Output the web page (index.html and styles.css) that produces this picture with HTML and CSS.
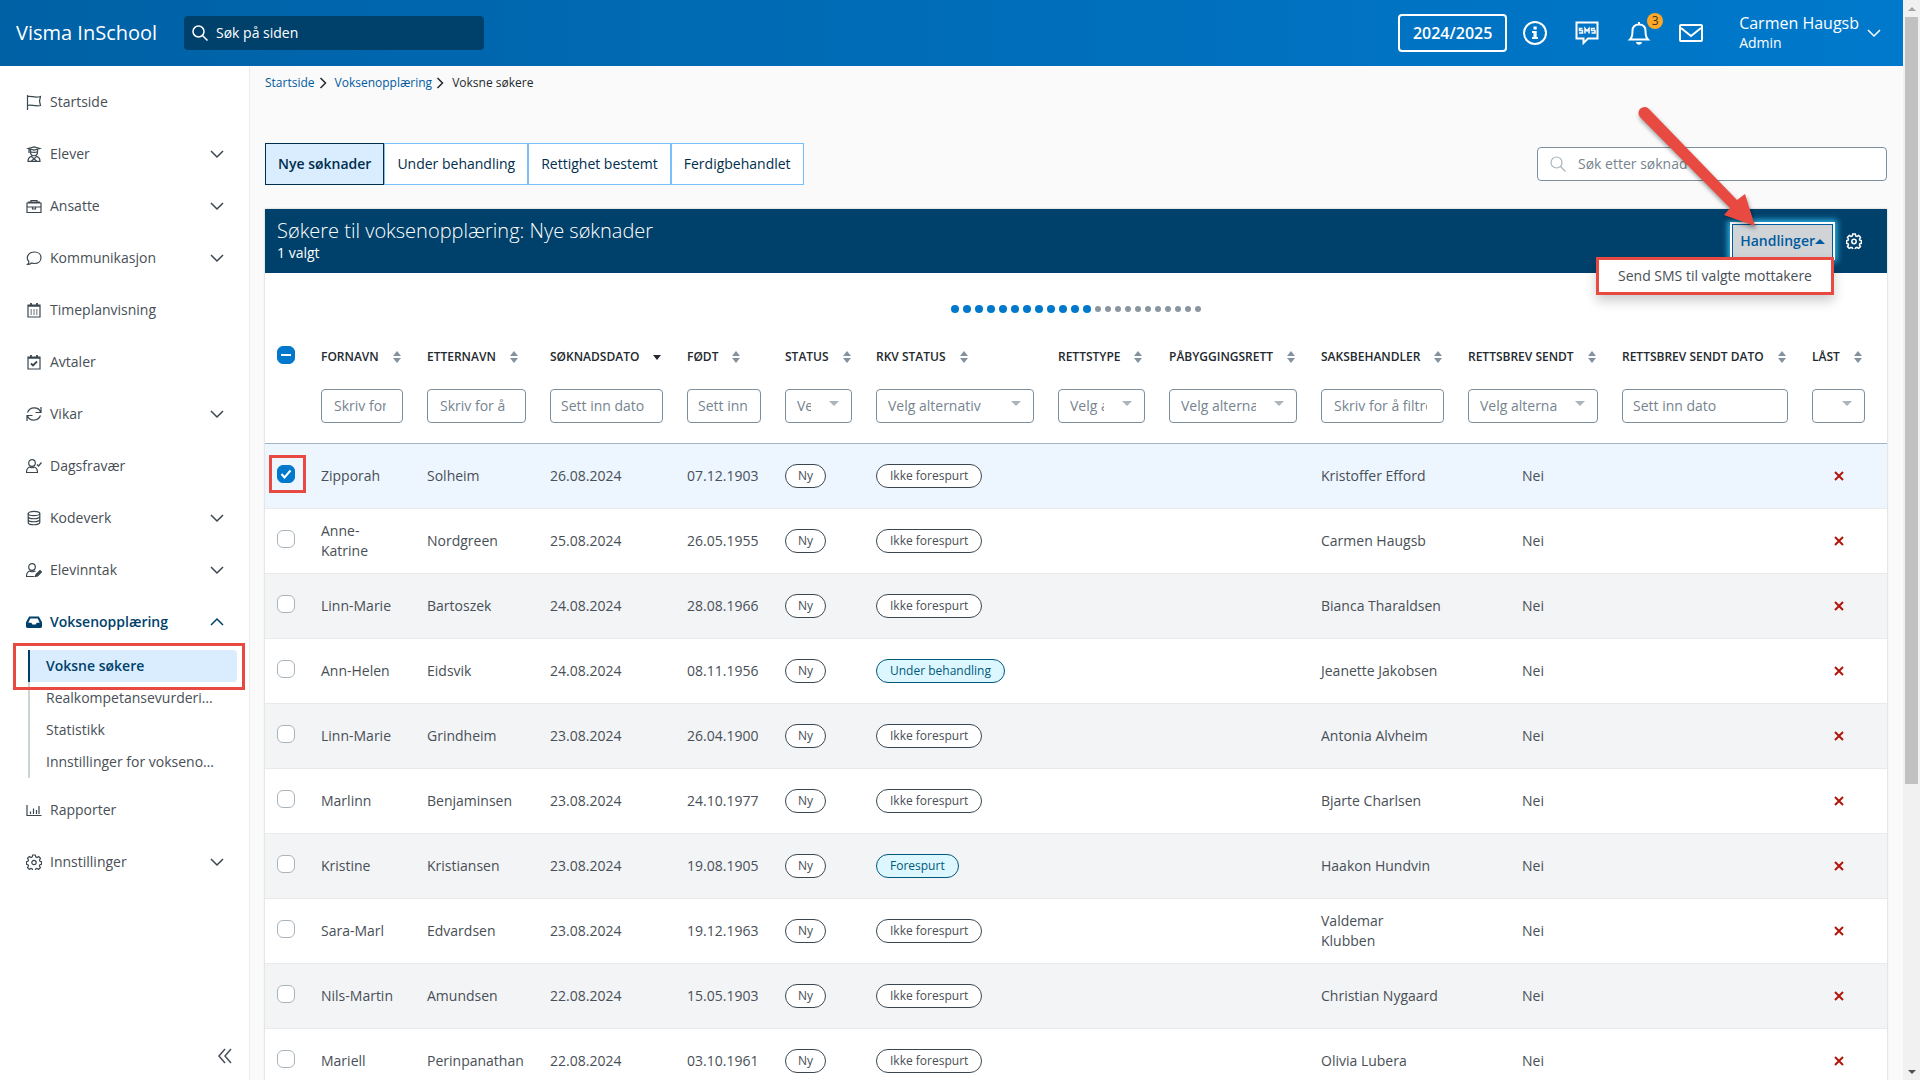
FILE: index.html
```html
<!DOCTYPE html>
<html lang="nb">
<head>
<meta charset="utf-8">
<title>Voksne søkere – Visma InSchool</title>
<link rel="stylesheet" href="styles.css">
</head>
<body>
<svg class="sprite" aria-hidden="true">
  <symbol id="i-down" viewBox="0 0 14 14"><path d="M1 4l6 6 6-6"/></symbol>
  <symbol id="i-up" viewBox="0 0 14 14"><path d="M1 10l6-6 6 6"/></symbol>
  <symbol id="i-right" viewBox="0 0 8 12"><path d="M1.500 1l5 5-5 5"/></symbol>
  <symbol id="i-search" viewBox="0 0 16 16"><circle cx="6.500" cy="6.500" r="5.500"/><path d="M10.500 10.500l5 5"/></symbol>
  <symbol id="i-gear" viewBox="0 0 16 16"><path d="M6.700 1h2.600l.4 1.900 1.300.6 1.700-1 1.800 1.800-1 1.700.5 1.300 1.500.4v2.600l-1.600.4-.5 1.300 1 1.600-1.800 1.800-1.600-1-1.300.5-.4 1.600H6.700l-.4-1.600-1.300-.5-1.700 1-1.800-1.800 1-1.600L2 10.700l-1.500-.4V7.700L2 7.300 2.500 6l-1-1.700 1.800-1.800 1.700 1 1.300-.6z"/><circle cx="8" cy="8.500" r="2.200"/></symbol>
</svg>

<div class="shell">
  <header class="topbar">
    <span class="brand">Visma InSchool</span>
    <label class="site-search">
      <svg class="ico"><use href="#i-search"/></svg>
      <input type="search" placeholder="Søk på siden" aria-label="Søk på siden">
    </label>
    <div class="tools">
      <button class="year" type="button">2024/2025</button>
      <button class="tool" type="button" aria-label="Informasjon">
        <svg viewBox="0 0 24 24"><circle cx="12" cy="12" r="11"/><path class="solid" d="M10.500 5.500h3.200v3h-3.200zM9 10h4.700v6H15v2H9v-2h1.500v-4H9z"/></svg>
      </button>
      <button class="tool" type="button" aria-label="SMS">
        <svg viewBox="0 0 24 24"><path d="M1.500 1.500h21v16H13l-4.500 4.500v-4.500h-7z"/><path class="thin" d="M7.500 7.500H4.500v2h3v2.500H4M10 12.500V7.500l2 2.500 2-2.500v5M20 7.500h-3.500v2H20V12h-3.500"/></svg>
      </button>
      <button class="tool" type="button" aria-label="Varsler, 3 nye">
        <svg viewBox="0 0 24 24"><path d="M12 1v2M3 18.500c2-2 2.500-4 2.500-8.500 0-4 2.500-6.500 6.500-6.500s6.500 2.500 6.500 6.500c0 4.500.5 6.500 2.500 8.500z"/><path class="solid" d="M9 21h6c-.5 3.500-5.500 3.500-6 0z"/></svg>
        <span class="badge">3</span>
      </button>
      <button class="tool" type="button" aria-label="Meldinger">
        <svg viewBox="0 0 24 24"><rect x="1" y="4" width="22" height="16" rx="1"/><path d="M2 7l10 8 10-8"/></svg>
      </button>
      <button class="user" type="button">
        <span class="who"><span class="name">Carmen Haugsb</span><span class="role">Admin</span></span>
        <svg class="ico"><use href="#i-down"/></svg>
      </button>
    </div>
  </header>

  <div class="body">
    <nav class="side" aria-label="Hovedmeny">
      <ul class="menu">
        <li><a href="#"><svg viewBox="0 0 16 16"><path d="M1.500 1v15M1.500 2.500c4-1 7 2 13 0l-1 4.500 1 4.500c-6 1.500-9-1.500-13 0"/></svg>Startside</a></li>
        <li><a href="#"><svg viewBox="0 0 16 16"><path d="M2 2.500L8 .8l6 1.700L8 4.200zM4.500 3.500V6c0 5 7 5 7 0V3.500M5 6c2 .5 4 .5 6 0M3 3v4M2 15.300c0-3 1.500-4.500 3.500-5l2.500 2.500 2.500-2.500c2 .5 3.500 2 3.500 5zM5.500 15l2.500-2.200 2.500 2.200"/></svg>Elever<svg class="chev"><use href="#i-down"/></svg></a></li>
        <li><a href="#"><svg viewBox="0 0 16 16"><path d="M1 5h14v9.500H1zM5 5V2.500h6V5M1 9h14M6.500 9v2h3V9M2.500 5V4h11v1"/></svg>Ansatte<svg class="chev"><use href="#i-down"/></svg></a></li>
        <li><a href="#"><svg viewBox="0 0 16 16"><path d="M1.500 14.500c1-1 1.500-2 1.300-3C-1 7 3 2 8.500 2c4 0 6.500 2.500 6.500 5.700S12.500 13.500 8.500 13.500c-1 0-2-.2-3-.5-1 1-2.500 1.500-4 1.500z"/></svg>Kommunikasjon<svg class="chev"><use href="#i-down"/></svg></a></li>
        <li><a href="#"><svg viewBox="0 0 16 16"><path d="M2 3h12v12H2z"/><path class="heavy" d="M2 3.800h12M5 1v3M11 1v3"/><path d="M4.500 8H6M7.300 8h1.500M10 8h1.500M4.500 10h1.500M7.300 10h1.500M10 10h1.500M4.500 12H6M7.300 12h1.500M10 12h1.500"/></svg>Timeplanvisning</a></li>
        <li><a href="#"><svg viewBox="0 0 16 16"><path d="M2 3h12v12H2z"/><path class="heavy" d="M2 3.800h12M5 1v3M11 1v3"/><path class="heavy" d="M5 9.500l2 2 4-4"/></svg>Avtaler</a></li>
        <li><a href="#"><svg viewBox="0 0 16 16"><path d="M15 1v5.500H9.500M14.500 6C12.500.5 4 .5 1.500 6.500M1 15V9.500h5.500M1.500 10C3.500 15.500 12 15.500 14.500 9.500"/></svg>Vikar<svg class="chev"><use href="#i-down"/></svg></a></li>
        <li><a href="#"><svg viewBox="0 0 16 16"><circle cx="6" cy="5" r="3.300"/><path d="M4 9c-2 .5-3.500 2-3.500 5.500h11C11.500 11 10 9.500 8 9c-1 1-3 1-4 0zM11 6.500L12.500 8l3-3.500"/></svg>Dagsfravær</a></li>
        <li><a href="#"><svg viewBox="0 0 16 16"><ellipse cx="8" cy="3.500" rx="5.800" ry="2.200"/><path d="M2.200 3.500v9c0 3 11.600 3 11.600 0v-9M2.200 6.500c0 3 11.600 3 11.600 0M2.200 9.500c0 3 11.600 3 11.600 0"/></svg>Kodeverk<svg class="chev"><use href="#i-down"/></svg></a></li>
        <li><a href="#"><svg viewBox="0 0 16 16"><circle cx="6" cy="5" r="3.300"/><path d="M9.500 9.500L8 9c-1 1-3 1-4 0-2 .5-3.500 2-3.500 5.500h8"/><path class="fill" d="M9.500 14.500l.5-2 4-4 1.500 1.500-4 4z"/></svg>Elevinntak<svg class="chev"><use href="#i-down"/></svg></a></li>
        <li class="open"><a href="#"><svg viewBox="0 0 16 16"><path class="fill" d="M3.500 3h9L15.500 8.500v3.500q0 1.500-1.500 1.500H2q-1.500 0-1.500-1.500V8.500z"/><path class="cut" d="M4.300 4.500h7.400l2 4.200h-3l-1 1.800H6.300l-1-1.800h-3z"/></svg>Voksenopplæring<svg class="chev"><use href="#i-up"/></svg></a>
          <ul class="sub">
            <li><a class="current" href="#" aria-current="page">Voksne søkere</a></li>
            <li><a href="#">Realkompetansevurderinger</a></li>
            <li><a href="#">Statistikk</a></li>
            <li><a href="#">Innstillinger for voksenopplæring</a></li>
          </ul>
        </li>
        <li><a href="#"><svg viewBox="0 0 16 16"><path d="M1 3v10.500h14.500M4.500 9.500v2.500M7.500 6.500v5.500M10.500 8v4M13 4v8"/></svg>Rapporter</a></li>
        <li><a href="#"><svg><use href="#i-gear"/></svg>Innstillinger<svg class="chev"><use href="#i-down"/></svg></a></li>
      </ul>
      <button class="collapse" type="button" aria-label="Skjul meny"><svg viewBox="0 0 14 16"><path d="M7 1L1 8l6 7M13 1L7 8l6 7"/></svg></button>
    </nav>

    <main class="content">
      <nav class="crumbs" aria-label="Brødsmuler">
        <a href="#">Startside</a><svg><use href="#i-right"/></svg><a href="#">Voksenopplæring</a><svg><use href="#i-right"/></svg><span>Voksne søkere</span>
      </nav>

      <div class="controls">
        <div class="tabs">
          <button class="tab active" type="button">Nye søknader</button>
          <button class="tab" type="button">Under behandling</button>
          <button class="tab" type="button">Rettighet bestemt</button>
          <button class="tab" type="button">Ferdigbehandlet</button>
        </div>
        <label class="find">
          <svg class="ico"><use href="#i-search"/></svg>
          <input type="search" placeholder="Søk etter søknad" aria-label="Søk etter søknad">
        </label>
      </div>

      <section class="card">
        <div class="card-head">
          <div>
            <h1>Søkere til voksenopplæring: Nye søknader</h1>
            <p>1 valgt</p>
          </div>
          <div class="card-tools">
            <div class="actions">
              <button class="handle" type="button" aria-expanded="true">Handlinger<span class="tri"></span></button>
              <ul class="drop"><li><a href="#">Send SMS til valgte mottakere</a></li></ul>
              <svg class="arrow" viewBox="0 0 130 130" aria-hidden="true"><path d="M11 6A6 6 0 0 0 2 14L92 105 86 112 117 123 107 91 99 97Z"/></svg>
            </div>
            <button class="cog" type="button" aria-label="Innstillinger"><svg><use href="#i-gear"/></svg></button>
          </div>
        </div>
        <div class="dots" aria-hidden="true"></div>
        <table class="grid">
          <colgroup id="cols"></colgroup>
          <thead><tr id="heads"></tr><tr id="filters" class="filters"></tr></thead>
          <tbody id="rows"></tbody>
        </table>
      </section>
    </main>
  </div>
</div>
<div class="scrollbar" aria-hidden="true"><span class="sb-up"></span><span class="sb-thumb"></span><span class="sb-down"></span></div>
<script src="app.js"></script>
</body>
</html>
```
FILE: styles.css
```css
*, *::before, *::after { box-sizing: border-box; }
body { margin: 0; height: 100vh; display: flex; overflow: hidden; font: 14px/20px "Open Sans", "Noto Sans", sans-serif; color: #484f56; background: #fafafa; }
button, input, select { font: inherit; color: inherit; margin: 0; }
button { cursor: pointer; }
a { color: inherit; text-decoration: none; }
ul { list-style: none; margin: 0; padding: 0; }
svg { fill: none; stroke: currentColor; flex: none; }
.sprite { position: absolute; width: 0; height: 0; }
.shell { flex: 1; min-width: 0; display: flex; flex-direction: column; }

.topbar { flex: none; height: 66px; display: flex; align-items: center; padding: 0 22px 0 16px; color: #fff; background: linear-gradient(90deg, #0061a5, #0079cc); }
.brand { font-size: 20px; width: 168px; }
.site-search { width: 300px; height: 34px; border-radius: 4px; background: #00416b; display: flex; align-items: center; gap: 8px; padding: 0 8px; }
.site-search .ico { width: 16px; height: 16px; stroke-width: 1.5; }
.site-search input, .find input { flex: 1; min-width: 0; border: 0; padding: 0; background: none; outline: 0; }
.site-search input::placeholder { color: #fff; opacity: 1; }
.tools { margin-left: auto; display: flex; align-items: center; }
.year { width: 109px; height: 38px; margin-right: 16px; border: 2px solid #fff; border-radius: 4px; background: none; font-size: 16px; font-weight: 600; padding: 0; }
.tool { position: relative; width: 24px; height: 24px; margin-right: 28px; padding: 0; border: 0; background: none; }
.tool svg { display: block; width: 24px; height: 24px; stroke-width: 2; }
.tool .solid { fill: currentColor; stroke: none; }
.tool .thin { stroke-width: 1.5; }
.badge { position: absolute; left: 20px; top: -8px; width: 16px; height: 16px; border-radius: 8px; background: #ffa726; color: #333; font-size: 12px; line-height: 16px; text-align: center; }
.user { display: flex; align-items: center; gap: 8px; border: 0; padding: 0; margin-left: 8px; background: none; text-align: left; }
.user .ico { width: 14px; height: 14px; stroke-width: 1.5; }
.who { display: flex; flex-direction: column; }
.name { font-size: 16px; }

.body { flex: 1; min-height: 0; display: flex; }
.side { flex: none; width: 250px; display: flex; flex-direction: column; background: #fff; border-right: 1px solid #eaebec; }
.menu { padding-top: 10px; }
.menu > li > a { display: flex; align-items: center; gap: 8px; height: 52px; padding: 0 25px 0 26px; }
.menu > li > a > svg { width: 16px; height: 16px; stroke-width: 1.2; color: #3a4750; }
.menu > li > a > .chev { width: 14px; height: 14px; margin-left: auto; stroke-width: 1.5; }
.menu .heavy { stroke-width: 1.8; }
.menu .fill { fill: currentColor; }
.menu .cut { fill: #fff; stroke: none; }
.menu > .open > a, .menu > .open > a > svg { color: #00416b; font-weight: 600; }
.sub { position: relative; margin: 2px 12px 6px 28px; box-shadow: inset 2px 0 #ccd4d8; }
.sub::after { content: ""; position: absolute; left: -15px; top: -7px; width: 232px; height: 47px; border: 3px solid #e84a42; pointer-events: none; }
.sub a { display: block; height: 32px; line-height: 32px; padding: 0 18px; white-space: nowrap; overflow: hidden; text-overflow: ellipsis; }
.sub .current { font-weight: 600; color: #00416b; background: #d9edff; box-shadow: inset 2px 0 #00416b; border-radius: 0 4px 4px 0; }
.collapse { margin: auto 17px 16px auto; border: 0; padding: 0; background: none; }
.collapse svg { display: block; width: 14px; height: 16px; stroke-width: 1.5; }

.content { flex: 1; min-width: 0; padding: 0 16px 0 15px; overflow: hidden; }
.crumbs { display: flex; align-items: center; height: 34px; font-size: 12px; gap: 4px; color: #23292e; font-weight: 500; }
.crumbs a { color: #005b9e; font-weight: 400; }
.crumbs svg { width: 8px; height: 12px; stroke-width: 1.5; margin-right: 4px; }
.controls { display: flex; align-items: center; justify-content: space-between; margin-top: 43px; }
.tabs { display: flex; }
.tab { height: 42px; padding: 0 12px; border: 1px solid #79bffa; background: #fff; color: #002e4d; }
.tab.active { border-color: #002e4d; background: #d9edff; font-weight: 600; }
.find { width: 350px; height: 34px; display: flex; align-items: center; gap: 12px; padding: 0 12px; border: 1px solid #7d8f9d; border-radius: 4px; background: #fff; }
.find .ico { width: 16px; height: 16px; color: #a9b4bc; stroke-width: 1.2; }
.find input::placeholder { color: #76848f; opacity: 1; }

.card { margin-top: 24px; background: #fff; box-shadow: 0 0 2px rgba(0,0,0,.25); }
.card-head { height: 64px; display: flex; justify-content: space-between; align-items: center; padding: 0 25px 0 12px; background: #00416b; color: #fff; }
.card-head h1 { margin: 0; font-size: 20px; line-height: 24px; font-weight: 300; }
.card-head p { margin: 0; font-weight: 500; }
.card-tools { display: flex; align-items: center; gap: 13px; }
.actions { position: relative; }
.handle { display: flex; align-items: center; height: 34px; padding: 0 7px; border: 1px solid #005b9e; background: #d1d4d7; color: #005b9e; font-weight: 600; box-shadow: 0 0 0 2px #fff, 0 0 6px 4px #2fb8e8; }
.tri { border: 5px solid transparent; border-top: 0; border-bottom-color: currentColor; }
.drop { position: absolute; z-index: 2; right: -1px; top: 33px; width: 238px; border: 3px solid #e84a42; background: #fff; color: #484f56; box-shadow: 0 6px 12px rgba(0,0,0,.2); }
.drop a { display: block; line-height: 32px; text-align: center; }
.arrow { position: absolute; z-index: 3; right: 65px; top: -121px; width: 130px; height: 130px; fill: #e84a42; stroke: none; filter: drop-shadow(1px 3px 2px rgba(0,0,0,.4)); pointer-events: none; }
.cog { border: 0; padding: 0; background: none; }
.cog svg { display: block; width: 16px; height: 16px; stroke-width: 1.5; }

.dots { display: flex; justify-content: center; align-items: center; gap: 4px; height: 72px; }
.dots span { width: 6px; height: 6px; border-radius: 50%; background: #8996a0; }
.dots .on { width: 8px; height: 8px; background: #0079cc; }

.grid { width: 100%; table-layout: fixed; border-collapse: collapse; }
.grid th { height: 24px; padding: 0 12px; text-align: left; font-size: 12px; font-weight: 600; color: #23292e; white-space: nowrap; }
.th { display: flex; align-items: center; }
.sort { display: flex; flex-direction: column; gap: 2px; margin-left: 14px; color: #8492a0; }
.sort::before, .sort::after { content: ""; border: 4px solid transparent; }
.sort::before { border-top: 0; border-bottom: 5px solid; }
.sort::after { border-bottom: 0; border-top: 5px solid; }
.sort.desc { color: #23292e; }
.sort.desc::before { display: none; }
.grid td { height: 65px; padding: 0 12px; border-bottom: 1px solid #e8eaec; }
.grid .filters td { height: 74px; border-bottom: 1px solid #a3b5c4; }
.grid tbody tr:nth-child(odd) { background: #f3f4f6; }
.grid tbody tr:first-child { background: #edf5ff; }
.grid .mid { text-align: center; }
.grid th:last-child, .grid td:last-child { padding-right: 22px; }
.flt { display: block; width: 100%; height: 34px; padding: 0 12px; border: 1px solid #7d8f9d; border-radius: 4px; background: #fff; color: #76848f; font-weight: 500; appearance: none; outline: 0; }
input.text { padding-right: 16px; }
input.date { padding: 0 10px; }
.flt::placeholder { color: #76848f; opacity: 1; }
.pick { position: relative; display: block; }
.pick select { padding-left: 11px; padding-right: 40px; text-overflow: clip; }
.pick::after { content: ""; position: absolute; right: 13px; top: 12px; border: 5px solid transparent; border-bottom: 0; border-top-color: #a9b4bc; }
.box { appearance: none; display: block; width: 18px; height: 18px; margin: 0; border: 1px solid #a9b4bc; border-radius: 6px; background: #fff; }
.tick { position: relative; display: block; width: 18px; height: 22px; }
.tick .on { border-color: #0079cc; background: #0079cc; }
.tick svg { position: absolute; left: 0; top: 0; width: 18px; height: 18px; color: #fff; stroke-width: 2; pointer-events: none; }
.marked::after { content: ""; position: absolute; left: -8px; top: -10px; width: 37px; height: 38px; border: 3px solid #e84a42; pointer-events: none; }
.pill { display: inline-block; height: 24px; line-height: 22px; padding: 0 12px; border: 1px solid #3a4750; border-radius: 12px; background: #fff; font-size: 12px; white-space: nowrap; vertical-align: middle; }
.pill.rkv { padding: 0 13px; }
.pill.info { border-color: #00587a; background: #dcf7ff; color: #00587a; }
.no { display: block; margin: auto; width: 10px; height: 10px; color: #b3150b; stroke-width: 2; }

.scrollbar { flex: none; width: 17px; display: flex; flex-direction: column; align-items: center; background: #f1f1f1; }
.sb-up, .sb-down { width: 0; border: 4px solid transparent; color: #a3a3a3; }
.sb-up { border-top: 0; border-bottom-color: currentColor; margin: 7px 0 6px; }
.sb-down { border-bottom: 0; border-top-color: #505050; margin: auto 0 6px; }
.sb-thumb { width: 13px; height: 71%; background: #c1c1c1; }
```
FILE: app.js
```js
const columns = [
  ["", 44], ["FORNAVN", 106, "text", "Skriv for å filtrere"], ["ETTERNAVN", 123, "text", "Skriv for å filtrere"],
  ["SØKNADSDATO", 137, "date", "Sett inn dato"], ["FØDT", 98, "date", "Sett inn dato"],
  ["STATUS", 91, "select", "Velg alternativ"], ["RKV STATUS", 182, "select", "Velg alternativ"],
  ["RETTSTYPE", 111, "select", "Velg alternativ"], ["PÅBYGGINGSRETT", 152, "select", "Velg alternativ"],
  ["SAKSBEHANDLER", 147, "text", "Skriv for å filtrere"], ["RETTSBREV SENDT", 154, "select", "Velg alternativ"],
  ["RETTSBREV SENDT DATO", 190, "date", "Sett inn dato"], ["LÅST", 87, "select", ""]
];
const people = [
  ["Zipporah", "Solheim", "26.08.2024", "07.12.1903", "Ikke forespurt", "Kristoffer Efford"],
  ["Anne-Katrine", "Nordgreen", "25.08.2024", "26.05.1955", "Ikke forespurt", "Carmen Haugsb"],
  ["Linn-Marie", "Bartoszek", "24.08.2024", "28.08.1966", "Ikke forespurt", "Bianca Tharaldsen"],
  ["Ann-Helen", "Eidsvik", "24.08.2024", "08.11.1956", "Under behandling", "Jeanette Jakobsen"],
  ["Linn-Marie", "Grindheim", "23.08.2024", "26.04.1900", "Ikke forespurt", "Antonia Alvheim"],
  ["Marlinn", "Benjaminsen", "23.08.2024", "24.10.1977", "Ikke forespurt", "Bjarte Charlsen"],
  ["Kristine", "Kristiansen", "23.08.2024", "19.08.1905", "Forespurt", "Haakon Hundvin"],
  ["Sara-Marl", "Edvardsen", "23.08.2024", "19.12.1963", "Ikke forespurt", "Valdemar<br>Klubben"],
  ["Nils-Martin", "Amundsen", "22.08.2024", "15.05.1903", "Ikke forespurt", "Christian Nygaard"],
  ["Mariell", "Perinpanathan", "22.08.2024", "03.10.1961", "Ikke forespurt", "Olivia Lubera"]
];
const put = (id, html) => { document.getElementById(id).innerHTML = html; };

put("cols", columns.map(c => `<col style="width:${c[1]}px">`).join(""));
put("heads", columns.map(([name]) => name
  ? `<th scope="col"><span class="th">${name}<span class="sort${name === "SØKNADSDATO" ? " desc" : ""}"></span></span></th>`
  : `<th scope="col"><span class="tick"><input class="box on" type="checkbox" aria-label="Velg alle"><svg viewBox="0 0 18 18"><path d="M4 9h10"/></svg></span></th>`).join(""));
put("filters", columns.map(([name, , kind, hint]) => {
  if (!name) return "<td></td>";
  if (kind === "select") return `<td><span class="pick"><select class="flt" aria-label="${name}"><option>${hint}</option></select></span></td>`;
  return `<td><input class="flt ${kind}" type="text" placeholder="${hint}" aria-label="${name}"></td>`;
}).join(""));
put("rows", people.map(([first, last, sent, born, rkv, owner], i) => `<tr>
  <td><span class="tick${i ? "" : " marked"}"><input class="box${i ? "" : " on"}" type="checkbox"${i ? "" : " checked"} aria-label="Velg ${first} ${last}">${i ? "" : '<svg viewBox="0 0 18 18"><path d="M4.500 9l3 3.500 6-7"/></svg>'}</span></td>
  <td>${first}</td><td>${last}</td><td>${sent}</td><td>${born}</td>
  <td><span class="pill">Ny</span></td>
  <td><span class="pill rkv${rkv === "Ikke forespurt" ? "" : " info"}">${rkv}</span></td>
  <td></td><td></td><td>${owner}</td><td class="mid">Nei</td><td></td>
  <td><svg class="no" viewBox="0 0 10 10" role="img" aria-label="Nei"><path d="M1 1l8 8M9 1L1 9"/></svg></td></tr>`).join(""));
document.querySelector(".dots").innerHTML = '<span class="on"></span>'.repeat(12) + "<span></span>".repeat(11);
```
